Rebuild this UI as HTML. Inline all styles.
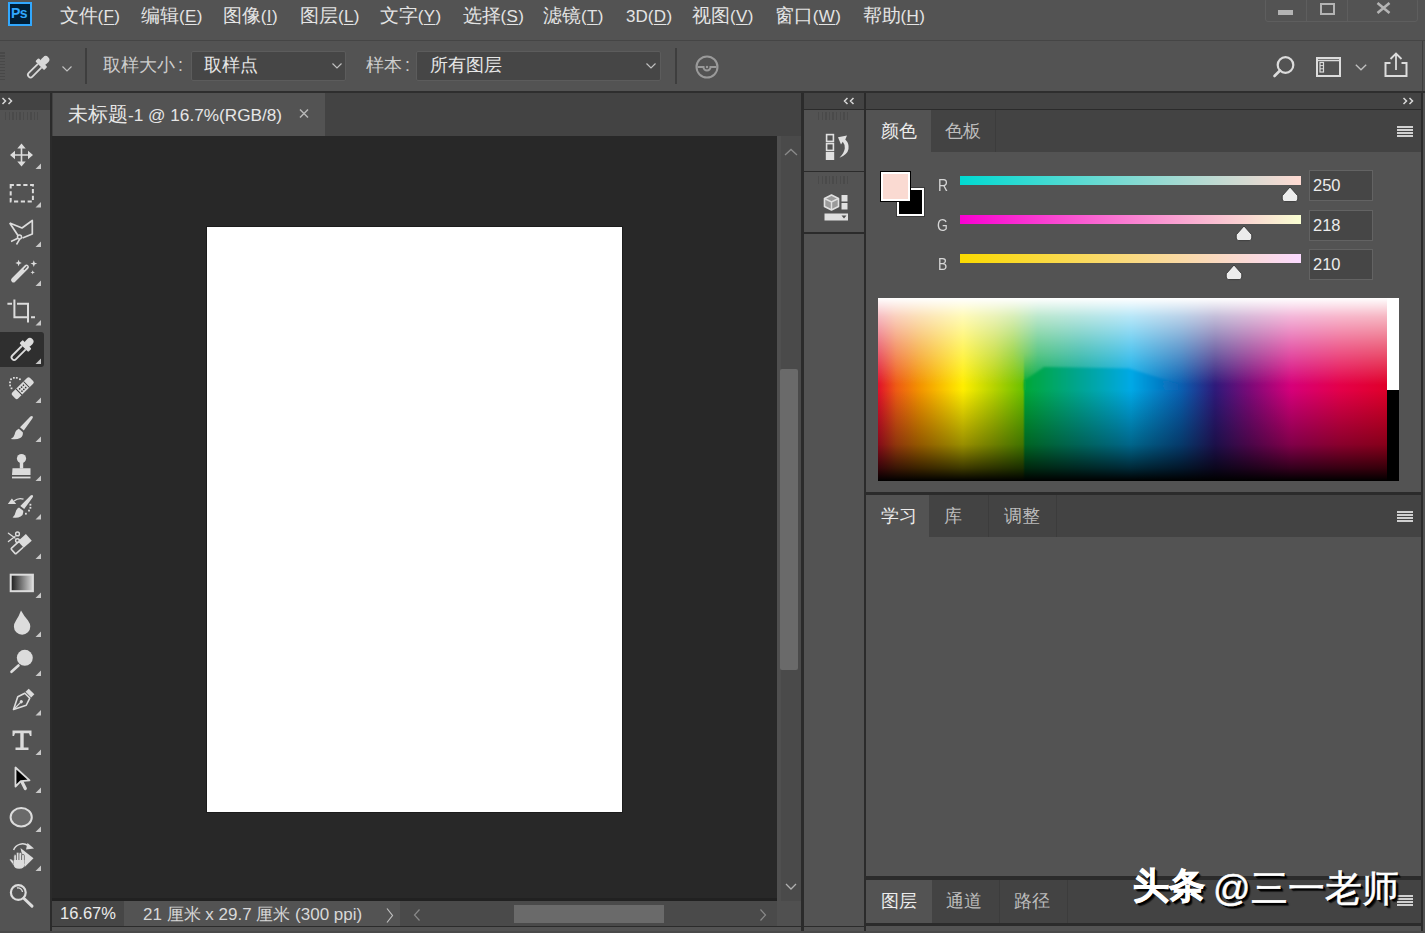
<!DOCTYPE html>
<html><head><meta charset="utf-8">
<style>
*{margin:0;padding:0;box-sizing:border-box}
html,body{width:1425px;height:933px;overflow:hidden;background:#535353;font-family:"Liberation Sans",sans-serif;color:#e6e6e6}
.a{position:absolute}
.t{position:absolute;white-space:nowrap;line-height:1}
svg{position:absolute;overflow:visible}
.mi{font-size:19.4px;color:#e4e4e4}
.mi .p{font-size:17px;letter-spacing:0.4px}
.mi .q{font-size:17px}
.mi u{text-decoration:underline;text-underline-offset:2px;text-decoration-thickness:1px}
.ob{font-size:17.8px}
.dd{background:#464646;border:1px solid #5c5c5c;border-radius:2px}
.pt{font-size:18px;color:#bdbdbd}
.pt.on{color:#ececec}
.ham{width:16px;height:11px;background:repeating-linear-gradient(#d0d0d0 0 2px,transparent 2px 3px)}
.rgb{font-size:17px;color:#d6d6d6;transform:scaleX(0.82);transform-origin:0 0}
.grip{background:repeating-linear-gradient(90deg,#4a4a4a 0 1.5px,transparent 1.5px 3.6px)}
.wm{font-size:36px;color:#fff;text-shadow:1px 1px 0 #000,2px 2px 0 #000,3px 3px 1px rgba(0,0,0,.7)}
</style></head><body>
<!-- MENU BAR -->
<div class="a" style="left:0;top:0;width:1425px;height:40px;background:#535353"></div>
<div class="a" style="left:0;top:40px;width:1425px;height:1px;background:#454545"></div>
<!-- OPTIONS BAR -->
<div class="a" style="left:0;top:41px;width:1425px;height:50px;background:#535353"></div>
<div class="a" style="left:0;top:91px;width:1425px;height:2px;background:#2e2e2e"></div>
<div class="a" style="left:1422px;top:41px;width:1px;height:50px;background:#3e3e3e"></div>
<!-- LEFT TOOLBAR -->
<div class="a" style="left:0;top:93px;width:50px;height:840px;background:#535353"></div>
<div class="a" style="left:0;top:93px;width:50px;height:17px;background:#434343"></div>
<div class="a" style="left:50px;top:93px;width:2px;height:840px;background:#2b2b2b"></div>
<!-- DOC TAB BAR -->
<div class="a" style="left:52px;top:93px;width:749px;height:43px;background:#434343"></div>
<div class="a" style="left:53px;top:93px;width:272px;height:43px;background:#535353"></div>
<!-- CANVAS -->
<div class="a" style="left:52px;top:136px;width:725px;height:765px;background:#282828"></div>
<div class="a" style="left:206px;top:226px;width:417px;height:587px;background:#1c1c1c"></div>
<div class="a" style="left:207px;top:227px;width:415px;height:585px;background:#ffffff"></div>
<!-- V SCROLL -->
<div class="a" style="left:777px;top:136px;width:24px;height:765px;background:#4a4a4a"></div>
<div class="a" style="left:777px;top:136px;width:4px;height:765px;background:#4f4f4f"></div>
<div class="a" style="left:780px;top:369px;width:18px;height:301px;background:#6a6a6a;border-radius:2px"></div>
<!-- STATUS BAR -->
<div class="a" style="left:52px;top:898px;width:725px;height:3px;background:#212121"></div>
<div class="a" style="left:52px;top:901px;width:749px;height:25px;background:#535353"></div>
<div class="a" style="left:52px;top:901px;width:72px;height:25px;background:#464646"></div>
<div class="a" style="left:400px;top:901px;width:377px;height:25px;background:#4a4a4a"></div>
<div class="a" style="left:514px;top:905px;width:150px;height:18px;background:#6a6a6a"></div>
<div class="a" style="left:777px;top:901px;width:24px;height:25px;background:#505050"></div>
<div class="a" style="left:52px;top:926px;width:752px;height:1px;background:#2b2b2b"></div>
<!-- BORDER -->
<div class="a" style="left:801px;top:93px;width:3px;height:840px;background:#2b2b2b"></div>
<!-- MIDDLE COLUMN -->
<div class="a" style="left:804px;top:93px;width:60px;height:16px;background:#434343"></div>
<div class="a" style="left:804px;top:109px;width:60px;height:1px;background:#2b2b2b"></div>
<div class="a" style="left:804px;top:171px;width:60px;height:1px;background:#2b2b2b"></div>
<div class="a" style="left:804px;top:232px;width:60px;height:2px;background:#2b2b2b"></div>
<div class="a" style="left:864px;top:93px;width:2px;height:840px;background:#2b2b2b"></div>
<!-- RIGHT PANELS -->
<div class="a" style="left:866px;top:93px;width:557px;height:16px;background:#434343"></div>
<div class="a" style="left:866px;top:109px;width:557px;height:1px;background:#2b2b2b"></div>
<div class="a" style="left:1421px;top:93px;width:2px;height:840px;background:#2b2b2b"></div>
<!-- color panel tabs -->
<div class="a" style="left:866px;top:110px;width:555px;height:42px;background:#434343"></div>
<div class="a" style="left:866px;top:110px;width:65px;height:42px;background:#535353"></div>
<div class="a" style="left:995px;top:110px;width:1px;height:42px;background:#3c3c3c"></div>
<div class="a" style="left:866px;top:492px;width:555px;height:3px;background:#2b2b2b"></div>
<!-- learn panel tabs -->
<div class="a" style="left:866px;top:495px;width:555px;height:42px;background:#434343"></div>
<div class="a" style="left:866px;top:495px;width:63px;height:42px;background:#535353"></div>
<div class="a" style="left:988px;top:495px;width:1px;height:42px;background:#3c3c3c"></div>
<div class="a" style="left:1056px;top:495px;width:1px;height:42px;background:#3c3c3c"></div>
<div class="a" style="left:866px;top:876px;width:555px;height:4px;background:#2b2b2b"></div>
<!-- layers tabs -->
<div class="a" style="left:866px;top:880px;width:555px;height:43px;background:#434343"></div>
<div class="a" style="left:866px;top:880px;width:66px;height:43px;background:#535353"></div>
<div class="a" style="left:999px;top:880px;width:1px;height:43px;background:#3c3c3c"></div>
<div class="a" style="left:1067px;top:880px;width:1px;height:43px;background:#3c3c3c"></div>
<div class="a" style="left:866px;top:923px;width:557px;height:3px;background:#2b2b2b"></div>

<div class="a" style="left:804px;top:926px;width:60px;height:1px;background:#2b2b2b"></div>
<div class="a" style="left:0;top:931px;width:1425px;height:2px;background:#4a4a4a"></div>
<!-- MENU TEXT -->
<div class="t mi" style="left:59.5px;top:6px">文件<span class="p">(<u>F</u>)</span></div>
<div class="t mi" style="left:141px;top:6px">编辑<span class="p">(<u>E</u>)</span></div>
<div class="t mi" style="left:222.7px;top:6px">图像<span class="p">(<u>I</u>)</span></div>
<div class="t mi" style="left:299.9px;top:6px">图层<span class="p">(<u>L</u>)</span></div>
<div class="t mi" style="left:379.7px;top:6px">文字<span class="p">(<u>Y</u>)</span></div>
<div class="t mi" style="left:462.5px;top:6px">选择<span class="p">(<u>S</u>)</span></div>
<div class="t mi" style="left:543px;top:6px">滤镜<span class="p">(<u>T</u>)</span></div>
<div class="t mi" style="left:692px;top:6px">视图<span class="p">(<u>V</u>)</span></div>
<div class="t mi" style="left:774.8px;top:6px">窗口<span class="p">(<u>W</u>)</span></div>
<div class="t mi" style="left:862.5px;top:6px">帮助<span class="p">(<u>H</u>)</span></div>
<div class="t mi" style="left:626px;top:6px"><span class="q">3D</span><span class="p">(<u>D</u>)</span></div>
<!-- PS LOGO -->
<div class="a" style="left:8px;top:2px;width:24px;height:24px;background:#001e36;border:2px solid #31a8ff"></div>
<div class="t" style="left:11px;top:6px;font-size:14px;font-weight:bold;color:#31a8ff;letter-spacing:-0.5px">Ps</div>
<!-- WINDOW BUTTONS -->
<div class="a" style="left:1265px;top:-2px;width:153px;height:24px;border:1px solid #5e5e5e;border-radius:3px"></div>
<div class="a" style="left:1306px;top:0;width:1px;height:21px;background:#5e5e5e"></div>
<div class="a" style="left:1347px;top:0;width:1px;height:21px;background:#5e5e5e"></div>
<div class="a" style="left:1278px;top:10px;width:15px;height:5px;background:#b4b4b4"></div>
<div class="a" style="left:1320px;top:3px;width:15px;height:12px;border:2.5px solid #b4b4b4"></div>
<svg style="left:1376px;top:2px" width="15" height="12"><path d="M1.5 1 L13.5 11 M13.5 1 L1.5 11" stroke="#b4b4b4" stroke-width="2.6"/></svg>
<!-- OPTIONS BAR -->
<div class="a" style="left:85px;top:48px;width:2px;height:36px;background:#3e3e3e"></div>
<div class="t ob" style="left:103px;top:57px;color:#cdcdcd">取样大小<span style="margin-left:3px">:</span></div>
<div class="a dd" style="left:191px;top:51px;width:155px;height:30px"></div>
<div class="t ob" style="left:204px;top:57px;color:#e6e6e6">取样点</div>
<div class="t ob" style="left:366px;top:57px;color:#cdcdcd">样本<span style="margin-left:3px">:</span></div>
<div class="a dd" style="left:416px;top:51px;width:245px;height:30px"></div>
<div class="t ob" style="left:430px;top:57px;color:#e6e6e6">所有图层</div>
<svg style="left:332px;top:63px" width="10" height="6"><path d="M0.5 0.5 L5 5 L9.5 0.5" fill="none" stroke="#c0c0c0" stroke-width="1.2"/></svg>
<svg style="left:646px;top:63px" width="10" height="6"><path d="M0.5 0.5 L5 5 L9.5 0.5" fill="none" stroke="#c0c0c0" stroke-width="1.2"/></svg>
<div class="a" style="left:675px;top:48px;width:2px;height:36px;background:#3e3e3e"></div>
<svg style="left:695px;top:55px" width="24" height="24"><circle cx="12" cy="12" r="10.5" fill="none" stroke="#9a9a9a" stroke-width="2"/><path d="M2.5 12 H8.5 A3.5 3.5 0 0 0 15.5 12 H21.5" fill="none" stroke="#9a9a9a" stroke-width="2"/><circle cx="12" cy="12" r="1.2" fill="#9a9a9a"/></svg>
<div class="a" style="left:0;top:52px;width:5px;height:28px;background:repeating-linear-gradient(180deg,#484848 0 1.5px,transparent 1.5px 3px)"></div>
<!-- eyedropper option icon -->
<svg style="left:0;top:0" width="80" height="90" fill="#d8d8d8"><g transform="translate(38 67.4) rotate(45)">
<rect x="-3.6" y="-14.5" width="7.2" height="9.5" rx="3.6"/>
<rect x="-6.2" y="-7" width="12.4" height="4.6" rx="1"/>
<path d="M-2.6 -2.5 V10.5 A2.6 2.6 0 0 0 2.6 10.5 V-2.5" fill="none" stroke="#d8d8d8" stroke-width="1.8"/></g></svg>
<svg style="left:62px;top:66px" width="10" height="6"><path d="M0.5 0.5 L5 5 L9.5 0.5" fill="none" stroke="#c0c0c0" stroke-width="1.2"/></svg>
<!-- right icons -->
<svg style="left:1272px;top:54px" width="26" height="26"><circle cx="13.5" cy="11" r="7.8" fill="none" stroke="#dcdcdc" stroke-width="2.2"/><path d="M8 16.5 L2.5 22" stroke="#dcdcdc" stroke-width="2.6" stroke-linecap="round"/></svg>
<svg style="left:1315px;top:56px" width="28" height="22"><rect x="2" y="2" width="23" height="18" fill="none" stroke="#dcdcdc" stroke-width="2"/><path d="M2 4.5 H25" stroke="#dcdcdc" stroke-width="1.5"/><rect x="5" y="6.5" width="3.5" height="9.5" fill="none" stroke="#dcdcdc" stroke-width="1.2"/><path d="M5 9.6 H8.5 M5 12.8 H8.5" stroke="#dcdcdc" stroke-width="1"/></svg>
<svg style="left:1355px;top:64px" width="12" height="7"><path d="M0.8 0.8 L6 5.8 L11.2 0.8" fill="none" stroke="#c0c0c0" stroke-width="1.3"/></svg>
<svg style="left:1382px;top:50px" width="28" height="30"><path d="M8.5 13 H3.5 V26 H24.5 V13 H19.5" fill="none" stroke="#dcdcdc" stroke-width="2"/><path d="M14 20 V4 M8.5 9 L14 3.5 L19.5 9" fill="none" stroke="#dcdcdc" stroke-width="1.8"/></svg>
<!-- TOOLBAR HEADER -->
<svg style="left:1px;top:97px" width="13" height="8"><path d="M1.5 1 L4.5 4 L1.5 7 M7.5 1 L10.5 4 L7.5 7" fill="none" stroke="#d8d8d8" stroke-width="1.5"/></svg>
<!-- DOC TAB -->
<div class="t" style="left:68px;top:105px;font-size:17.2px;color:#e6e6e6"><span style="font-size:19.5px">未标题</span>-1 @ 16.7%(RGB/8)</div>
<svg style="left:299px;top:109px" width="10" height="9"><path d="M1 0.5 L9 8.5 M9 0.5 L1 8.5" stroke="#b8b8b8" stroke-width="1.5"/></svg>
<!-- STATUS -->
<div class="t" style="left:60px;top:905px;font-size:16.5px;color:#ebebeb">16.67%</div>
<div class="t" style="left:143px;top:906px;font-size:17px;color:#d8d8d8">21 厘米 x 29.7 厘米 (300 ppi)</div>
<svg style="left:386px;top:908px" width="8" height="15"><path d="M1 0.5 L6.5 7.5 L1 14.5" fill="none" stroke="#c0c0c0" stroke-width="1.2"/></svg>
<svg style="left:413px;top:909px" width="8" height="12"><path d="M6.5 0.5 L1.5 6 L6.5 11.5" fill="none" stroke="#8a8a8a" stroke-width="1.2"/></svg>
<svg style="left:759px;top:909px" width="8" height="12"><path d="M1.5 0.5 L6.5 6 L1.5 11.5" fill="none" stroke="#8a8a8a" stroke-width="1.2"/></svg>
<svg style="left:784px;top:148px" width="14" height="8"><path d="M1 7 L7 1.5 L13 7" fill="none" stroke="#8a8a8a" stroke-width="1.3"/></svg>
<svg style="left:785px;top:883px" width="12" height="8"><path d="M1 1 L6 6 L11 1" fill="none" stroke="#b0b0b0" stroke-width="1.3"/></svg>
<!-- MIDDLE HEADER -->
<svg style="left:843px;top:97px" width="13" height="8"><path d="M4.5 1 L1.5 4 L4.5 7 M10.5 1 L7.5 4 L10.5 7" fill="none" stroke="#d8d8d8" stroke-width="1.5"/></svg>
<svg style="left:1402px;top:97px" width="13" height="8"><path d="M1.5 1 L4.5 4 L1.5 7 M7.5 1 L10.5 4 L7.5 7" fill="none" stroke="#d8d8d8" stroke-width="1.5"/></svg>
<!-- PANEL TABS TEXT -->
<div class="t pt on" style="left:881px;top:122px">颜色</div>
<div class="t pt" style="left:945px;top:122px">色板</div>
<div class="t pt on" style="left:881px;top:507px">学习</div>
<div class="t pt" style="left:944px;top:507px">库</div>
<div class="t pt" style="left:1004px;top:507px">调整</div>
<div class="t pt on" style="left:881px;top:892px">图层</div>
<div class="t pt" style="left:946px;top:892px">通道</div>
<div class="t pt" style="left:1014px;top:892px">路径</div>
<div class="a ham" style="left:1397px;top:126px"></div>
<div class="a ham" style="left:1397px;top:511px"></div>
<div class="a ham" style="left:1397px;top:895px"></div>
<!-- COLOR PANEL -->
<div class="a" style="left:897px;top:188px;width:27px;height:28px;background:#000;border:2px solid #fff;box-shadow:0 0 0 1px #3a3a3a"></div>
<div class="a" style="left:880px;top:171px;width:31px;height:31px;background:#000"></div>
<div class="a" style="left:881px;top:172px;width:29px;height:29px;background:#fadad2;border:2px solid #fff"></div>
<div class="t rgb" style="left:938px;top:177px">R</div>
<div class="t rgb" style="left:937px;top:217px">G</div>
<div class="t rgb" style="left:938px;top:256px">B</div>
<div class="a" style="left:960px;top:176px;width:341px;height:9px;background:linear-gradient(90deg,rgb(0,218,210),rgb(255,218,210))"></div>
<div class="a" style="left:960px;top:215px;width:341px;height:9px;background:linear-gradient(90deg,rgb(250,0,210),rgb(250,255,210))"></div>
<div class="a" style="left:960px;top:254px;width:341px;height:9px;background:linear-gradient(90deg,rgb(250,218,0),rgb(250,218,255))"></div>
<svg style="left:1280.6px;top:186px" width="18" height="17"><path d="M9 1 L16.8 9.8 V13 Q16.8 15.6 14.2 15.6 H3.8 Q1.2 15.6 1.2 13 V9.8 Z" fill="#ececec" stroke="#3a3a3a" stroke-width="1"/></svg>
<svg style="left:1235.4px;top:225px" width="18" height="17"><path d="M9 1 L16.8 9.8 V13 Q16.8 15.6 14.2 15.6 H3.8 Q1.2 15.6 1.2 13 V9.8 Z" fill="#ececec" stroke="#3a3a3a" stroke-width="1"/></svg>
<svg style="left:1224.5px;top:264px" width="18" height="17"><path d="M9 1 L16.8 9.8 V13 Q16.8 15.6 14.2 15.6 H3.8 Q1.2 15.6 1.2 13 V9.8 Z" fill="#ececec" stroke="#3a3a3a" stroke-width="1"/></svg>
<div class="a" style="left:1309px;top:170px;width:64px;height:31px;background:#464646;border:1px solid #636363"></div>
<div class="t" style="left:1313px;top:177px;font-size:16.5px;color:#ececec">250</div>
<div class="a" style="left:1309px;top:210px;width:64px;height:31px;background:#464646;border:1px solid #636363"></div>
<div class="t" style="left:1313px;top:217px;font-size:16.5px;color:#ececec">218</div>
<div class="a" style="left:1309px;top:249px;width:64px;height:31px;background:#464646;border:1px solid #636363"></div>
<div class="t" style="left:1313px;top:256px;font-size:16.5px;color:#ececec">210</div>
<svg style="left:878px;top:298px" width="509" height="183">
<defs>
<linearGradient id="hue" gradientUnits="userSpaceOnUse" x1="0" y1="0" x2="509" y2="0"><stop offset="0.0000" stop-color="#e0102a"/><stop offset="0.0354" stop-color="#ee5a14"/><stop offset="0.0806" stop-color="#f39200"/><stop offset="0.1670" stop-color="#ffee00"/><stop offset="0.2299" stop-color="#b4d200"/><stop offset="0.2849" stop-color="#6cc000"/><stop offset="0.2888" stop-color="#00a838"/><stop offset="0.4008" stop-color="#00a596"/><stop offset="0.4971" stop-color="#00a9e6"/><stop offset="0.5953" stop-color="#0a5fb0"/><stop offset="0.6621" stop-color="#2e1a7a"/><stop offset="0.7289" stop-color="#7a0a78"/><stop offset="0.8114" stop-color="#d6007a"/><stop offset="0.9077" stop-color="#e4004a"/><stop offset="1.0000" stop-color="#e0002a"/></linearGradient>
<linearGradient id="hue2" gradientUnits="userSpaceOnUse" x1="0" y1="0" x2="509" y2="0"><stop offset="0.0000" stop-color="#e0102a"/><stop offset="0.0354" stop-color="#ee5a14"/><stop offset="0.0806" stop-color="#f39200"/><stop offset="0.1670" stop-color="#ffee00"/><stop offset="0.2299" stop-color="#b4d200"/><stop offset="0.2652" stop-color="#78c400"/><stop offset="0.3143" stop-color="#10ac50"/><stop offset="0.4008" stop-color="#00a596"/><stop offset="0.4971" stop-color="#00a9e6"/><stop offset="0.5953" stop-color="#0a5fb0"/><stop offset="0.6621" stop-color="#2e1a7a"/><stop offset="0.7289" stop-color="#7a0a78"/><stop offset="0.8114" stop-color="#d6007a"/><stop offset="0.9077" stop-color="#e4004a"/><stop offset="1.0000" stop-color="#e0002a"/></linearGradient>
<linearGradient id="mg" x1="0" y1="0" x2="0" y2="1"><stop offset="0.3" stop-color="#fff"/><stop offset="0.47" stop-color="#000"/></linearGradient>
<mask id="mk"><rect width="509" height="183" fill="url(#mg)"/></mask>
<linearGradient id="wh" x1="0" y1="0" x2="0" y2="1"><stop offset="0" stop-color="#fff" stop-opacity="1"/><stop offset="0.1" stop-color="#fff" stop-opacity="0.72"/><stop offset="0.25" stop-color="#fff" stop-opacity="0.42"/><stop offset="0.475" stop-color="#fff" stop-opacity="0"/></linearGradient>
<linearGradient id="bk" x1="0" y1="0" x2="0" y2="1"><stop offset="0.5" stop-color="#000" stop-opacity="0"/><stop offset="0.8" stop-color="#000" stop-opacity="0.4"/><stop offset="0.93" stop-color="#000" stop-opacity="0.76"/><stop offset="1" stop-color="#000" stop-opacity="1"/></linearGradient>
<filter id="bl" x="-10%" y="-50%" width="120%" height="200%"><feGaussianBlur stdDeviation="1.2"/></filter>
</defs>
<rect width="509" height="183" fill="url(#hue)"/>
<rect width="509" height="183" fill="url(#hue2)" mask="url(#mk)"/>
<rect width="509" height="183" fill="url(#wh)"/>
<path d="M146 83 L166 69 L251 70.6 L300 86 V92 H146 Z" fill="url(#hue)" filter="url(#bl)"/>
<rect width="509" height="183" fill="url(#bk)"/>
</svg>
<div class="a" style="left:1387px;top:298px;width:12px;height:92px;background:#fff"></div>
<div class="a" style="left:1387px;top:390px;width:12px;height:91px;background:#000"></div>
<!-- MIDDLE COL ICONS -->
<div class="a grip" style="left:818px;top:112px;width:31px;height:8px"></div>
<div class="a grip" style="left:818px;top:176px;width:31px;height:8px"></div>
<div class="a grip" style="left:5px;top:112px;width:33px;height:8px"></div>
<svg style="left:824px;top:132px" width="26" height="30">
<rect x="2.6" y="2.6" width="6.8" height="6.8" fill="none" stroke="#e0e0e0" stroke-width="1.6"/>
<rect x="2.6" y="11.6" width="6.8" height="6.8" fill="none" stroke="#e0e0e0" stroke-width="1.6"/>
<rect x="1.8" y="20" width="8.4" height="8" fill="#e0e0e0"/>
<path d="M14 5.2 L23 3.6 L21.3 7.6 Q25.3 11.5 24.5 17 Q23.5 22.5 15.5 25.8 Q20.5 20.5 20.8 16.3 Q21 12.5 18.8 9.8 L17 12.5 Z" fill="#e0e0e0"/>
</svg>
<svg style="left:823px;top:193px" width="28" height="30">
<path d="M8.5 2 L15.5 5.5 V13.5 L8.5 17 L1.5 13.5 V5.5 Z" fill="#9a9a9a" stroke="#e0e0e0" stroke-width="1.6" stroke-linejoin="round"/>
<path d="M1.5 5.5 L8.5 9 L15.5 5.5 M8.5 9 V17" fill="none" stroke="#e0e0e0" stroke-width="1.4"/>
<rect x="18.5" y="2" width="6" height="6.5" fill="#e0e0e0"/>
<rect x="18.5" y="10" width="6" height="6.5" fill="#e0e0e0"/>
<rect x="1.5" y="20.5" width="23.5" height="7" fill="#e0e0e0"/>
<path d="M18.5 22.5 H23.5 L21 25.5 Z" fill="#505050"/>
</svg>
<!-- WATERMARK -->
<div class="t wm" style="left:1133px;top:868px;font-weight:900;-webkit-text-stroke:0.8px #fff">头条</div>
<div class="t wm" style="left:1213px;top:870px;font-size:37px;-webkit-text-stroke:0.5px #fff">@三一老师</div>
<!-- TOOL ICONS -->
<div class="a" style="left:0;top:332px;width:44px;height:35px;background:#2f2f2f;border-radius:0 3px 3px 0"></div>
<svg style="left:0;top:0" width="50" height="933" fill="#dcdcdc" stroke="#dcdcdc">
<path d="M41 163.5 V169 H35.5 Z" stroke="none" fill="#c8c8c8"/>
<path d="M41 202.0 V207.5 H35.5 Z" stroke="none" fill="#c8c8c8"/>
<path d="M41 241.5 V247 H35.5 Z" stroke="none" fill="#c8c8c8"/>
<path d="M41 280.5 V286 H35.5 Z" stroke="none" fill="#c8c8c8"/>
<path d="M41 320.0 V325.5 H35.5 Z" stroke="none" fill="#c8c8c8"/>
<path d="M41 358.5 V364 H35.5 Z" stroke="none" fill="#c8c8c8"/>
<path d="M41 397.5 V403 H35.5 Z" stroke="none" fill="#c8c8c8"/>
<path d="M41 436.5 V442 H35.5 Z" stroke="none" fill="#c8c8c8"/>
<path d="M41 475.5 V481 H35.5 Z" stroke="none" fill="#c8c8c8"/>
<path d="M41 514.0 V519.5 H35.5 Z" stroke="none" fill="#c8c8c8"/>
<path d="M41 553.5 V559 H35.5 Z" stroke="none" fill="#c8c8c8"/>
<path d="M41 592.5 V598 H35.5 Z" stroke="none" fill="#c8c8c8"/>
<path d="M41 631.5 V637 H35.5 Z" stroke="none" fill="#c8c8c8"/>
<path d="M41 670.5 V676 H35.5 Z" stroke="none" fill="#c8c8c8"/>
<path d="M41 710.0 V715.5 H35.5 Z" stroke="none" fill="#c8c8c8"/>
<path d="M41 749.5 V755 H35.5 Z" stroke="none" fill="#c8c8c8"/>
<path d="M41 787.5 V793 H35.5 Z" stroke="none" fill="#c8c8c8"/>
<path d="M41 826.5 V832 H35.5 Z" stroke="none" fill="#c8c8c8"/>
<path d="M41 865.5 V871 H35.5 Z" stroke="none" fill="#c8c8c8"/>

<!-- move -->
<path d="M21.5 147 V163 M13 155 H30" stroke-width="1.6" fill="none"/>
<path d="M21.5 143.5 L17.3 148.5 H25.7 Z M21.5 166.5 L17.3 161.5 H25.7 Z M10 155 L15 150.8 V159.2 Z M33 155 L28 150.8 V159.2 Z" stroke="none"/>
<!-- marquee -->
<rect x="10.7" y="185" width="22.2" height="16.5" fill="none" stroke-width="2" stroke-dasharray="4.2 2.6" stroke-dashoffset="1"/>
<!-- lasso -->
<path d="M9.7 223 L22 228 L32.3 220.5 V234 L22.5 238 M9.7 223 L18 235.5" fill="none" stroke-width="1.7" stroke-linejoin="round"/>
<circle cx="19.5" cy="237" r="2" fill="none" stroke-width="1.5"/>
<path d="M17.8 238.3 L11 241.5 M19.8 239 L16.5 244.5" fill="none" stroke-width="1.5"/>
<!-- wand -->
<path d="M13.5 280 L26.5 267" stroke-width="4.8" stroke-linecap="round" fill="none"/>
<path d="M24.2 269.3 L26.8 266.7" stroke="#535353" stroke-width="1.2" stroke-linecap="round"/>
<path d="M18.6 259.8 L19.5 262.1 L21.8 263 L19.5 263.9 L18.6 266.2 L17.7 263.9 L15.4 263 L17.7 262.1 Z M33.8 260.2 L34.7 262.7 L37.2 263.6 L34.7 264.5 L33.8 267 L32.9 264.5 L30.4 263.6 L32.9 262.7 Z M32.7 270.2 L33.3 271.8 L34.9 272.4 L33.3 273 L32.7 274.6 L32.1 273 L30.5 272.4 L32.1 271.8 Z" stroke="none"/>
<!-- crop -->
<path d="M7.4 303.7 H12 M14.4 299.5 V317.2 H27 M31 317.2 H35 M17 303.7 H28 V322.5" fill="none" stroke-width="2"/>
<!-- eyedropper -->
<g transform="translate(21.8 349.7) rotate(45)" stroke="none">
<rect x="-3.6" y="-15" width="7.2" height="9.5" rx="3.6"/>
<rect x="-6.2" y="-7.5" width="12.4" height="4.6" rx="1"/>
<path d="M-2.6 -3 V10.8 A2.6 2.6 0 0 0 2.6 10.8 V-3" fill="none" stroke="#dcdcdc" stroke-width="1.8"/></g>
<!-- healing -->
<g transform="translate(22.7 388.2) rotate(-44.4)" stroke="none">
<rect x="-12.5" y="-4.2" width="25" height="8.4" rx="2"/>
<rect x="-5.8" y="-4.2" width="1" height="8.4" fill="#3a3a3a"/>
<rect x="4.8" y="-4.2" width="1" height="8.4" fill="#3a3a3a"/>
<g fill="#3a3a3a"><circle cx="-2.6" cy="-1.6" r="0.85"/><circle cx="0" cy="-1.6" r="0.85"/><circle cx="2.6" cy="-1.6" r="0.85"/><circle cx="-2.6" cy="1.6" r="0.85"/><circle cx="0" cy="1.6" r="0.85"/><circle cx="2.6" cy="1.6" r="0.85"/></g>
</g>
<g stroke="none"><rect x="13" y="377" width="1.8" height="1.7"/><rect x="15.9" y="377" width="1.8" height="1.7"/><rect x="19" y="378.4" width="1.8" height="1.7"/><rect x="10.1" y="378.4" width="1.8" height="1.7"/><rect x="9.1" y="381.5" width="1.8" height="1.7"/><rect x="9.2" y="384.6" width="1.8" height="1.7"/><rect x="10.6" y="387.5" width="1.8" height="1.7"/></g>
<!-- brush -->
<path d="M32.8 416.6 Q33.2 417.6 32.2 418.8 L23.8 430.6 L20 427.3 L30.4 416.6 Q31.8 415.5 32.8 416.6 Z" stroke="none"/>
<path d="M18.8 428.8 L22.8 432.2 Q23.5 436 20.2 438 Q16.5 439.9 10.8 438.9 Q14 437.4 14.6 434.4 Q15.4 430.2 18.8 428.8 Z" stroke="none"/>
<!-- stamp -->
<circle cx="21.5" cy="458.5" r="4.6" stroke="none"/>
<rect x="19.8" y="461" width="3.4" height="7.5" stroke="none"/>
<path d="M12.5 468.3 H30.5 V475 H12 Z" stroke="none"/>
<rect x="12" y="476.6" width="18.5" height="1.8" stroke="none"/>
<!-- history brush -->
<path d="M33 495.6 Q33.4 496.6 32.4 497.8 L24.2 509 L20.3 505.9 L30.6 495.6 Q32 494.5 33 495.6 Z" stroke="none"/>
<path d="M19 507.4 L23.2 510.8 Q23.8 514.6 20.6 516.5 Q17.2 518.3 12.6 517.4 Q15 515.8 15.3 513 Q16 509 19 507.4 Z" stroke="none"/>
<path d="M14 501 Q18.5 497.5 23.5 499.2" fill="none" stroke-width="1.4"/>
<path d="M7.8 503.9 L11.9 498.4 L16.2 503.9 Z" stroke="none"/>
<g stroke="none"><rect x="29.5" y="503.8" width="1.8" height="1.8"/><rect x="29.5" y="506.9" width="1.8" height="1.8"/><rect x="28.1" y="509.7" width="1.8" height="1.8"/><rect x="25" y="512.8" width="1.8" height="1.8"/></g>
<!-- eraser -->
<path d="M8.4 533.2 L15 538 M8.4 541.5 L15 536.5" fill="none" stroke-width="1.3" stroke-linecap="round"/>
<circle cx="17.5" cy="533.9" r="1.9" fill="none" stroke-width="1.4"/><circle cx="17.5" cy="540.6" r="1.9" fill="none" stroke-width="1.4"/>
<g transform="translate(20.8 544.6) rotate(-42)">
<rect x="0" y="-4.4" width="10.8" height="8.8" stroke="none"/>
<path d="M0 -3.6 H-9.2 Q-10.2 -3.6 -10.2 -2.6 V2.6 Q-10.2 3.6 -9.2 3.6 H0" fill="none" stroke-width="1.6"/>
</g>
<!-- gradient -->
<defs><linearGradient id="gr" x1="0" x2="1" y1="0" y2="0"><stop offset="0" stop-color="#1a1a1a"/><stop offset="1" stop-color="#d8d8d8"/></linearGradient></defs>
<rect x="10.7" y="574.7" width="22.2" height="16.5" fill="url(#gr)" stroke-width="2"/>
<!-- drop -->
<path d="M21 610.5 Q24 616 28 620.5 Q30.5 624 30.3 626.5 A8.2 8.2 0 0 1 13.9 626.5 Q13.7 624 16 620.5 Q19 616 21 610.5 Z" stroke="none"/>
<!-- dodge -->
<circle cx="24.8" cy="657.8" r="8" stroke="none"/>
<path d="M18.5 665.5 L11.5 671.8" stroke-width="2.6" stroke-linecap="round" fill="none"/>
<!-- pen -->
<g transform="rotate(45 22 701)">
<rect x="18" y="687.5" width="8" height="4.5" stroke="none"/>
<path d="M18.5 693.5 H25.5 L28 701 L22 713 L16 701 Z" fill="none" stroke-width="1.6" stroke-linejoin="round"/>
<circle cx="22" cy="702" r="1.6" stroke="none"/>
<path d="M22 702 V713" stroke-width="1.2" fill="none"/>
</g>
<!-- type -->
<path d="M12.5 730.5 H31.5 V736 H30 L29 733.2 H23.7 V747.5 H28.5 V750 H15.5 V747.5 H20.3 V733.2 H15 L14 736 H12.5 Z" stroke="none"/>
<!-- path select -->
<path d="M21.5 781 L25.3 788.5" stroke-width="3.2" stroke-linecap="round" fill="none"/>
<path d="M15.5 767.5 V786.5 L20.8 781.2 L29.5 780.3 Z" fill="#000" stroke-width="1.8" stroke-linejoin="round"/>
<!-- ellipse -->
<ellipse cx="21.2" cy="817.2" rx="10.6" ry="9.2" fill="#6a6a6a" stroke-width="2"/>
<!-- rotate/hand -->
<path d="M13.6 850 A9.5 9 0 0 1 28 845.5" fill="none" stroke-width="1.5"/>
<path d="M27.5 843 L34 848.5 L26 849.5 Z" stroke="none"/>
<path d="M20.5 848 L33.5 858.2 L24.7 867 Z" stroke="none"/>
<g stroke="#535353" stroke-width="0.7">
<path d="M9.3 859.6 Q10.3 858.4 11.6 859.2 L14.6 861.8 V866 Q12.5 865 9.3 859.6 Z"/>
<rect x="13.8" y="854.6" width="2.8" height="10" rx="1.4"/>
<rect x="16.4" y="852.2" width="2.8" height="12" rx="1.4"/>
<rect x="19" y="852.4" width="2.8" height="12" rx="1.4"/>
<rect x="21.6" y="854.4" width="2.8" height="10" rx="1.4"/>
<path d="M13.8 860 H24.4 V864.5 Q24.4 868.8 19.2 868.8 Q13.8 868.8 13.8 864.5 Z" stroke="none"/>
</g>
<!-- zoom -->
<circle cx="18.3" cy="892.5" r="7.4" fill="none" stroke-width="2.2"/>
<path d="M17 888 A4.5 4.5 0 0 1 22.5 892" fill="none" stroke-width="1.3"/>
<path d="M24 898.5 L32 906.2" stroke-width="3" stroke-linecap="round" fill="none"/>
</svg>
</body></html>
